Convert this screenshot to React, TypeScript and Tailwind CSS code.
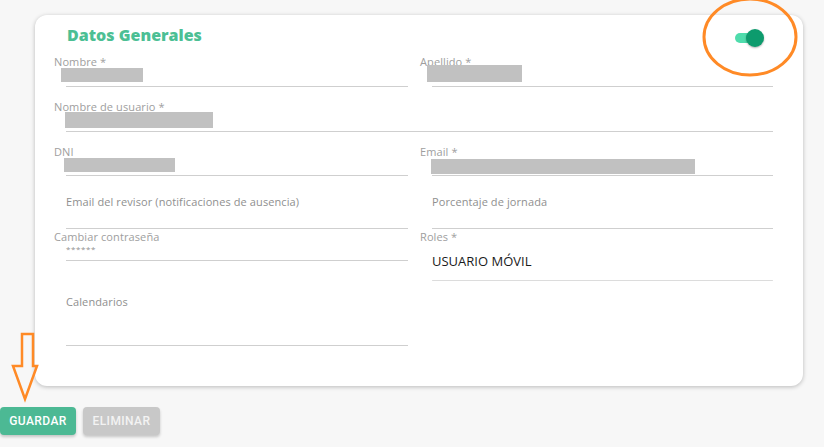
import React from "react";

function Field({
    label,
    box,
    content,
    className,
}: {
    label?: string;
    box?: React.ReactNode;
    content?: React.ReactNode;
    className?: string;
}) {
    return (
        <div className={"flex flex-col " + (className ?? "")}>
            {label && (
                <div className="h-[12px] text-[11px] leading-[12px] tracking-[0.1px] text-[#9e9e9e] whitespace-nowrap">
                    {label}
                </div>
            )}
            <div className="flex-1 min-h-0">{box ?? content}</div>
            <div className="ml-[12px] h-px bg-[#cfcfcf]" />
        </div>
    );
}

function Redacted({ cls }: { cls: string }) {
    return <div className={"bg-[#c1c1c1] " + cls} />;
}

export default function App() {
    return (
        <div className="relative w-[824px] h-[447px] overflow-hidden bg-[#f7f7f7] font-['Open_Sans','Noto_Sans',sans-serif]">
            <div className="pt-[15px] pl-[35px] pr-[21px]">
                <div className="h-[371px] rounded-[12px] bg-white pl-[19px] pr-[30px] shadow-[0_1px_4px_rgba(0,0,0,0.25)]">
                    {/* header */}
                    <div className="h-[41px] flex items-start justify-between">
                        <h2 className="mt-[10px] ml-[13px] text-[16px] leading-[20px] font-extrabold text-[#4cbf94]">
                            Datos Generales
                        </h2>
                        {/* switch */}
                        <div className="relative mt-[15px] mr-[10px] w-[28px] h-[16px] flex items-center">
                            <div className="w-[24px] h-[10px] rounded-full bg-[#4fdcac]" />
                            <div className="absolute right-[-1px] top-[-1px] w-[18px] h-[18px] rounded-full bg-[#0d9b6d] shadow-[0_1px_2px_rgba(0,0,0,0.3)]" />
                        </div>
                    </div>

                    {/* rows */}
                    <div className="grid grid-cols-[354px_353px] gap-x-[12px]">
                        <Field className="h-[31px]" label="Nombre *" box={<Redacted cls="ml-[7px] w-[82px] h-[14px]" />} />
                        <Field className="h-[31px]" label="Apellido *" box={<Redacted cls="ml-[7px] mt-[-3px] w-[95px] h-[17px]" />} />

                        <Field
                            className="col-span-2 h-[31px] mt-[14px]"
                            label="Nombre de usuario *"
                            box={<Redacted cls="ml-[11px] mt-[-1px] w-[148px] h-[16px]" />}
                        />

                        <Field className="h-[30px] mt-[14px]" label="DNI" box={<Redacted cls="ml-[10px] w-[111px] h-[14px]" />} />
                        <Field className="h-[30px] mt-[14px]" label="Email *" box={<Redacted cls="ml-[11px] mt-[1px] w-[264px] h-[15px]" />} />

                        <Field
                            className="h-[53px]"
                            content={
                                <div className="h-full flex items-center pl-[12px] text-[11px] tracking-[0.1px] text-[#8f8f8f] whitespace-nowrap">
                                    Email del revisor (notificaciones de ausencia)
                                </div>
                            }
                        />
                        <Field
                            className="h-[53px]"
                            content={
                                <div className="h-full flex items-center pl-[12px] text-[11px] tracking-[0.1px] text-[#8f8f8f]">
                                    Porcentaje de jornada
                                </div>
                            }
                        />

                        <Field
                            className="h-[30px] mt-[2px]"
                            label="Cambiar contraseña"
                            content={
                                <div className="pt-[1px] pl-[12px] text-[8px] leading-[9px] text-[#8f8f8f] tracking-[0.6px]">******</div>
                            }
                        />
                        <div className="mt-[2px] h-[50px] flex flex-col">
                            <div className="h-[12px] text-[11px] leading-[12px] tracking-[0.1px] text-[#9e9e9e]">Roles *</div>
                            <div className="flex-1 flex items-center pl-[12px] text-[13px] text-[#1a1a1a]">USUARIO MÓVIL</div>
                            <div className="ml-[12px] h-px rounded-full bg-[#dcdcdc]" />
                        </div>

                        <Field
                            className="h-[65px]"
                            content={
                                <div className="pt-[15px] pl-[12px] text-[11px] leading-[12px] tracking-[0.1px] text-[#8f8f8f]">
                                    Calendarios
                                </div>
                            }
                        />
                    </div>
                </div>
            </div>

            {/* actions */}
            <div className="mt-[21px] flex gap-[7px] font-['Roboto',sans-serif]">
                <button className="w-[76px] h-[28px] rounded-[4px] bg-[#4cb994] text-white text-[12px] font-medium tracking-[0.4px] shadow-[0_2px_3px_rgba(0,0,0,0.2)]">
                    GUARDAR
                </button>
                <button className="w-[77px] h-[28px] rounded-[4px] bg-[#c8c8c8] text-[#f3f3f3] text-[12px] font-medium tracking-[0.4px] shadow-[0_2px_3px_rgba(0,0,0,0.2)]">
                    ELIMINAR
                </button>
            </div>

            {/* annotations */}
            <svg className="absolute left-0 top-0 pointer-events-none" width="824" height="447">
                <ellipse cx="750" cy="37" rx="46" ry="38" fill="none" stroke="#ff8a26" strokeWidth="3" />
                <polygon
                    points="22,334 33,334 33,366 37,366 25,399 13,366 22,366"
                    fill="none"
                    stroke="#ff8a26"
                    strokeWidth="2.5"
                    strokeLinejoin="miter"
                />
            </svg>
        </div>
    );
}
